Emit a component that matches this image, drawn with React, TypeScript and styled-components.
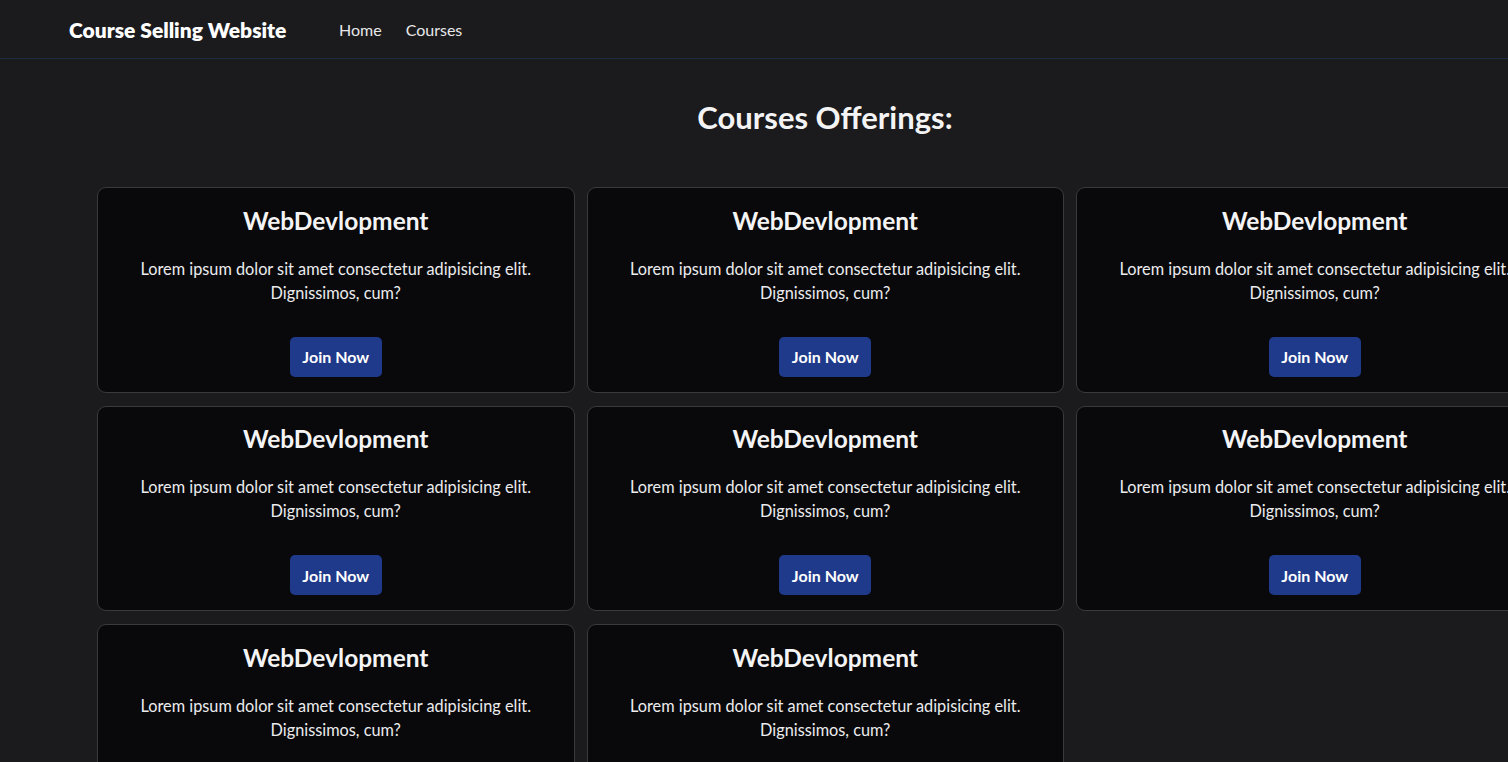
import styled, { createGlobalStyle } from "styled-components";

const GlobalStyle = createGlobalStyle`
  html, body {
    margin: 0;
    padding: 0;
    background: #1b1b1d;
    color: #f4f4f5;
    font-family: Lato, "Noto Sans", sans-serif;
    overflow-x: hidden;
  }
  * { box-sizing: border-box; }
`;

const Nav = styled.nav`
  height: 59px;
  display: flex;
  align-items: center;
  padding-left: 69px;
  border-bottom: 1px solid #1f2a44;
  background: #1b1b1d;
`;

const Brand = styled.div`
  font-size: 21px;
  font-weight: 800;
  color: #ffffff;
  width: 270px;
`;

const NavLinks = styled.ul`
  display: flex;
  gap: 24px;
  margin: 0;
  padding: 0;
  list-style: none;
`;

const NavLink = styled.li`
  font-size: 16px;
  color: #e8e8ea;
`;

const Main = styled.main`
  padding-left: 97px;
`;

const Container = styled.div`
  width: 1456px;
`;

const Heading = styled.h1`
  margin: 0;
  padding: 40px 0 52px;
  text-align: center;
  font-size: 31px;
  font-weight: 700;
  line-height: 36px;
`;

const Grid = styled.div`
  display: grid;
  grid-template-columns: repeat(3, 477.5px);
  column-gap: 12px;
  row-gap: 13px;
`;

const Card = styled.div`
  background: #09090b;
  border: 1px solid #3a3a3e;
  border-radius: 9px;
  padding: 16.5px 24px 15px;
  display: flex;
  flex-direction: column;
  align-items: center;
  text-align: center;
`;

const Title = styled.h2`
  margin: 0;
  font-size: 24.5px;
  font-weight: 700;
  line-height: 32px;
`;

const Text = styled.p`
  margin: 20px 0 32px;
  font-size: 16.3px;
  line-height: 24px;
  color: #ececee;
  white-space: nowrap;
`;

const JoinButton = styled.button`
  height: 40px;
  padding: 0 12.5px;
  border: none;
  border-radius: 5px;
  background: #1f3a8a;
  color: #ffffff;
  font-family: inherit;
  font-size: 16px;
  font-weight: 700;
`;

const courses = Array.from({ length: 8 }, (_, i) => i);

export default function App() {
  return (
    <>
      <GlobalStyle />
      <Nav>
        <Brand>Course Selling Website</Brand>
        <NavLinks>
          <NavLink>Home</NavLink>
          <NavLink>Courses</NavLink>
        </NavLinks>
      </Nav>
      <Main>
        <Container>
          <Heading>Courses Offerings:</Heading>
          <Grid>
            {courses.map((i) => (
              <Card key={i}>
                <Title>WebDevlopment</Title>
                <Text>
                  Lorem ipsum dolor sit amet consectetur adipisicing elit.
                  <br />
                  Dignissimos, cum?
                </Text>
                <JoinButton>Join Now</JoinButton>
              </Card>
            ))}
          </Grid>
        </Container>
      </Main>
    </>
  );
}
